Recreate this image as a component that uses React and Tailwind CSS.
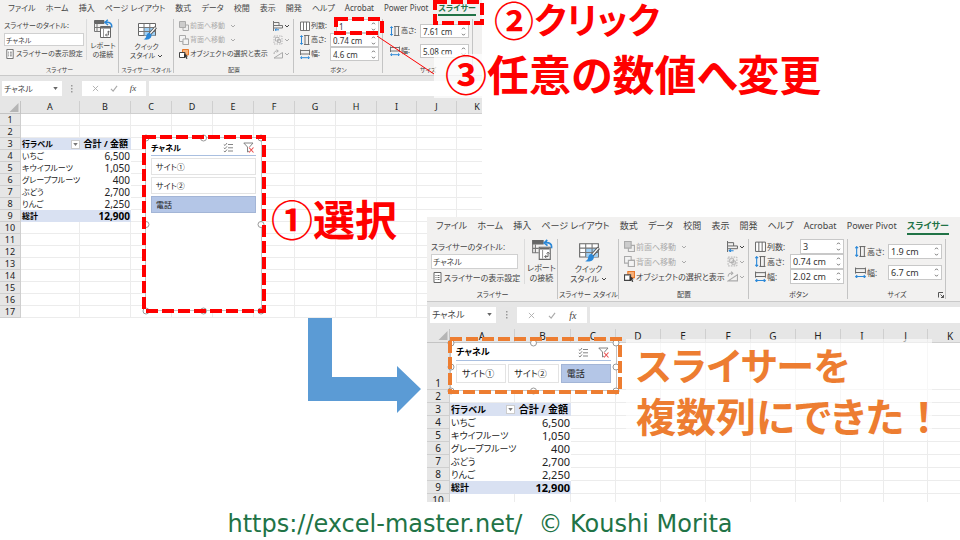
import React from "react";

const SIZES = {
  sm: {
    tabs: "h-[17px] pl-2 pr-[6px] text-[8px]",
    tabLine: "pb-px leading-[11px] border-b-2",
    body: "h-[58px] text-[7px] leading-[10px]",
    groups: ["w-[119px]", "w-[55px]", "w-[120px]", "w-[89px]", "w-[90px]"],
    groupLabel: "h-[11px] text-[6px]",
    titleBox: "h-[13px] w-20",
    titleCol: "w-[86px] pl-1 pt-1",
    bigIcon: "h-5 w-5",
    bigPad: "pt-1",
    bigText: "leading-[9px]",
    arrangeRow: "h-[14px]",
    icon: "h-[10px] w-[10px]",
    spinH: "h-[14px]",
    sizeGap: "gap-[6px]",
    colInput: "w-[43px]",
    spin: "w-[49px]",
    num: "text-[8px]",
    bar: "h-[25px] px-[2px] pt-[5px]",
    barBox: "h-[15px]",
    nameBox: "w-[60px] text-[8px]",
    dots: "w-[20px]",
    fxBox: "w-[64px] text-[9px]",
    head: "h-[13px] text-[9px]",
    first: "h-3",
    row: "h-3 text-[8px] leading-[10px]",
    cellNum: "text-[10px]",
    rowHead: "text-[9px]",
    cols: ["w-[59px]", "w-[51px]", "w-[41px]", "w-[41px]", "w-[41px]", "w-[41px]", "w-[41px]", "w-[41px]", "w-[40px]", "w-[40px]", "w-[41px]"],
    corner: "w-[21px]",
    cellHead: "text-[9px]",
  },
  lg: {
    tabs: "h-5 pl-[9px] pr-[11px] text-[9px]",
    tabLine: "pb-px leading-[12px] border-b-2",
    body: "h-[64px] text-[8px] leading-[11px]",
    groups: ["w-[131px]", "w-[61px]", "w-[130px]", "w-[99px]", "w-[98px]"],
    groupLabel: "h-[13px] text-[7px]",
    titleBox: "h-[15px] w-[87px]",
    titleCol: "w-[97px] pl-1 pt-1",
    bigIcon: "h-[22px] w-[22px]",
    bigPad: "pt-1",
    bigText: "leading-[10px]",
    arrangeRow: "h-[15px]",
    icon: "h-[11px] w-[11px]",
    spinH: "h-[15px]",
    sizeGap: "gap-[6px]",
    colInput: "w-[44px]",
    spin: "w-[54px]",
    num: "text-[9px]",
    bar: "h-[27px] px-[3px] pt-[5px]",
    barBox: "h-[16px]",
    nameBox: "w-[66px] text-[9px]",
    dots: "w-[21px]",
    fxBox: "w-[70px] text-[10px]",
    head: "h-[14px] text-[10px]",
    first: "h-[47px]",
    row: "h-[13px] text-[9px] leading-[11px]",
    cellNum: "text-[11px]",
    rowHead: "text-[10px]",
    cols: ["w-[65px]", "w-[56px]", "w-[45px]", "w-[45px]", "w-[45px]", "w-[45px]", "w-[45px]", "w-[45px]", "w-[43px]", "w-[44px]", "w-[45px]"],
    corner: "w-[23px]",
    cellHead: "text-[10px]",
  },
};

const TABS = ["ファイル", "ホーム", "挿入", "ページ レイアウト", "数式", "データ", "校閲", "表示", "開発", "ヘルプ", "Acrobat", "Power Pivot"];
const LETTERS = "ABCDEFGHIJK".split("");
const PIVOT = [
  ["いちご", "6,500"],
  ["キウイフルーツ", "1,050"],
  ["グレープフルーツ", "400"],
  ["ぶどう", "2,700"],
  ["りんご", "2,250"],
];

function Chevron({ className = "h-1 w-[6px]", up = false }) {
  return (
    <svg viewBox="0 0 6 4" className={className} fill="none" stroke="currentColor">
      <path d={up ? "M1 3 L3 1 L5 3" : "M1 1 L3 3 L5 1"} />
    </svg>
  );
}

function ReportIcon({ className }) {
  return (
    <svg viewBox="0 0 20 20" className={className} fill="none">
      <path d="M1.5 1.5H11V4.5H1.5Z" fill="#666" stroke="#666" />
      <path d="M1.5 4.5V12.5H7M1.5 8.5H7M4 5V12" stroke="#777" />
      <path d="M7.5 7.5H17.5V18.5H7.5Z" fill="#fff" stroke="#666" />
      <path d="M8 8.800H17" stroke="#666" strokeWidth="1.500" />
      <path d="M10.500 10V18" stroke="#999" />
      <path d="M12.500 16H15.500V12M12.500 16l1.500-1.500M12.500 16l1.500 1.500M15.500 12l-1.300 1.300M15.500 12l1.300 1.300" stroke="#555" strokeWidth=".8" />
      <path d="M18.500 8.500C19.500 5 17 2.500 12 3.500M14.800 .8L12 3.500L15 6" stroke="#2b88d8" strokeWidth="1.500" />
    </svg>
  );
}

function QuickIcon({ className }) {
  return (
    <svg viewBox="0 0 20 20" className={className} fill="none">
      <path d="M1.500 2.500H18.500V14.500H1.500Z" fill="#fff" stroke="#666" />
      <path d="M7 6.500H18V14.500H7Z" fill="#9fd0f5" />
      <path d="M1.500 6.500H18.500M1.500 10.500H18.500M7 2.500V14.500M12.800 2.500V14.500" stroke="#777" />
      <path d="M18.800 6.200L12.500 13.500" stroke="#555" strokeWidth="3" />
      <path d="M18.500 6.500L12.800 13" stroke="#fff" strokeWidth="1.200" />
      <path d="M13 12C10.500 11.500 9.500 13.500 9 16C8.700 17.300 7.500 18 6.500 18.300C10 19.300 14.500 18.500 14.500 14Z" fill="#2b88d8" />
    </svg>
  );
}

function FrontIcon({ className, back }) {
  return (
    <svg viewBox="0 0 10 10" className={className} fill="none" stroke="#aaa">
      <path d="M4 4H9.500V9.500H4Z" fill="#eee" />
      <path d="M.5 .5H6.500V6.500H.5Z" fill={back ? "#f3f3f3" : "#ccc"} />
      {back && <path d="M4 4H9.500V9.500H4Z" fill="#f3f3f3" />}
    </svg>
  );
}

function SelectIcon({ className }) {
  return (
    <svg viewBox="0 0 10 10" className={className} fill="none">
      <path d="M3.500 .5H9.500V6H3.500Z" fill="#f7b27a" stroke="#e8792b" />
      <path d="M.5 3.500H6V8.500H.5Z" fill="#fff" stroke="#444" />
      <path d="M5 4L9 7.500H7.500L8.500 9.500L7.300 10L6.500 8L5 9Z" fill="#333" />
    </svg>
  );
}

function AlignIcon({ className }) {
  return (
    <svg viewBox="0 0 10 10" className={className} fill="none" stroke="#666">
      <path d="M.5 0V10M1 1.500H6V4.500M1 4.500H9.500V7H1" strokeWidth=".9" />
      <path d="M6 8.800H2M3.500 7.500L2 8.800L3.500 10" stroke="#2b88d8" />
    </svg>
  );
}

function GroupIcon({ className }) {
  return (
    <svg viewBox="0 0 10 10" className={className} fill="none" stroke="#aaa" strokeWidth=".8">
      <path d="M1 1H9V9H1Z" strokeDasharray="1.500 1" />
      <path d="M2.500 2.500H6V6H2.500ZM4.500 4.500H7.500V7.500H4.500Z" />
    </svg>
  );
}

function RotateIcon({ className }) {
  return (
    <svg viewBox="0 0 10 10" className={className} fill="none" stroke="#aaa">
      <path d="M1 9H9.500V3.500Z" />
      <path d="M1 5C1 2.500 3 1.500 5 2M3.800 .5L5.300 2L3.800 3.500" />
    </svg>
  );
}

function ColumnsIcon({ className }) {
  return (
    <svg viewBox="0 0 10 10" className={className} fill="#fff" stroke="#666" strokeWidth=".9">
      <path d="M.5 1H9.500V9.500H.5ZM3.500 1V9.500M6.500 1V9.500" />
    </svg>
  );
}

function HeightIcon({ className }) {
  return (
    <svg viewBox="0 0 10 10" className={className} fill="none">
      <path d="M1.500 .7V9.300M.2 2L1.500 .6L2.800 2M.2 8L1.500 9.400L2.800 8" stroke="#2b88d8" />
      <path d="M4 .5H9.500M4 9.500H9.500M5 .5V9.500M8.500 .5V9.500" stroke="#666" strokeWidth=".9" />
    </svg>
  );
}

function WidthIcon({ className }) {
  return (
    <svg viewBox="0 0 10 10" className={className} fill="none">
      <path d="M.7 8.700H9.300M2 7.400L.6 8.700L2 10M8 7.400L9.400 8.700L8 10" stroke="#2b88d8" />
      <path d="M.5 .5V6M9.500 .5V6M.5 1.500H9.500M.5 5H9.500" stroke="#666" strokeWidth=".9" />
    </svg>
  );
}

function Group({ width, label, labelHeight, launcher, children }) {
  return (
    <section className={`relative flex shrink-0 flex-col ${width}`}>
      <div className="min-h-0 flex-1">{children}</div>
      <div className={`flex items-center justify-center whitespace-nowrap ${labelHeight}`}>{label}</div>
      <span className="absolute top-[2px] right-0 bottom-[2px] w-px bg-[#c4c4c4]" />
      {launcher && (
        <svg viewBox="0 0 6 6" className="absolute right-[2px] bottom-[3px] h-[6px] w-[6px]" fill="none" stroke="#555">
          <path d="M.5 5.500V.5H5M2.500 2.500L5.500 5.500M5.500 3V5.500H3" />
        </svg>
      )}
    </section>
  );
}

function SpinField({ s, id, icon: Icon, label, value, width }) {
  return (
    <div className={`flex items-center ${s.spinH}`}>
      <Icon className={`shrink-0 ${s.icon}`} />
      <label htmlFor={id} className="pl-px whitespace-nowrap">{label}</label>
      <div className={`ml-auto flex h-full shrink-0 items-center border border-[#c8c8c8] bg-white ${width}`}>
        <input id={id} defaultValue={value} className={`h-full w-full min-w-0 flex-1 bg-transparent pl-[2px] text-[#333] outline-none ${s.num}`} />
        <div className="flex h-full w-[10px] shrink-0 flex-col items-center justify-around">
          <button type="button" aria-label={`${label} +`} className="flex"><Chevron up className="h-[3px] w-[5px]" /></button>
          <button type="button" aria-label={`${label} -`} className="flex"><Chevron className="h-[3px] w-[5px]" /></button>
        </div>
      </div>
    </div>
  );
}

function Ribbon({ s, id, data, launcher }) {
  return (
    <header className="border-b border-[#c9c9c9] bg-[#f2f1f0] text-[#444]">
      <nav className={`flex items-center justify-between whitespace-nowrap ${s.tabs}`}>
        {TABS.map((t) => (
          <button type="button" key={t} className={`border-transparent ${s.tabLine}`}>{t}</button>
        ))}
        <button type="button" className={`border-[#217346] font-bold text-[#217346] ${s.tabLine}`}>スライサー</button>
      </nav>
      <div className={`flex ${s.body}`}>
        <Group width={s.groups[0]} label="スライサー" labelHeight={s.groupLabel}>
          <div className="flex h-full">
            <div className={`flex shrink-0 flex-col gap-[2px] whitespace-nowrap ${s.titleCol}`}>
              <label htmlFor={`${id}-title`}>スライサーのタイトル:</label>
              <input id={`${id}-title`} defaultValue="チャネル" className={`border border-[#d0d0d0] bg-white pl-px outline-none ${s.titleBox}`} />
              <button type="button" className="mt-px flex items-center gap-px pl-px">
                <svg viewBox="0 0 9 11" className={`shrink-0 ${s.icon}`} fill="#fff" stroke="#666">
                  <path d="M1 .5H8V10.500H1Z" />
                  <path d="M2.500 3.500H3.500M4.500 3.500H6.500M2.500 5.500H3.500M4.500 5.500H6.500M2.500 7.500H3.500M4.500 7.500H6.500" />
                </svg>
                スライサーの表示設定
              </button>
            </div>
            <button type="button" className={`mt-[2px] mb-1 flex flex-1 flex-col items-center border-l border-[#dcdcdc] whitespace-nowrap ${s.bigText}`}>
              <ReportIcon className={`mb-[2px] ${s.bigIcon}`} />
              <span>レポート</span>
              <span>の接続</span>
            </button>
          </div>
        </Group>
        <Group width={s.groups[1]} label="スライサー スタイル" labelHeight={s.groupLabel}>
          <button type="button" className={`flex w-full flex-col items-center whitespace-nowrap ${s.bigPad} ${s.bigText}`}>
            <QuickIcon className={`mb-px ${s.bigIcon}`} />
            <span>クイック</span>
            <span className="flex items-center gap-[2px]">スタイル <Chevron /></span>
          </button>
        </Group>
        <Group width={s.groups[2]} label="配置" labelHeight={s.groupLabel}>
          <div className="flex justify-between pt-[2px] pr-1 pl-[5px] whitespace-nowrap">
            <div>
              <button type="button" disabled className={`flex items-center gap-px text-[#aaa] ${s.arrangeRow}`}>
                <FrontIcon className={s.icon} />前面へ移動<Chevron className="ml-1 h-1 w-[6px]" />
              </button>
              <button type="button" disabled className={`flex items-center gap-px text-[#aaa] ${s.arrangeRow}`}>
                <FrontIcon back className={s.icon} />背面へ移動<Chevron className="ml-1 h-1 w-[6px]" />
              </button>
              <button type="button" className={`flex items-center gap-px ${s.arrangeRow}`}>
                <SelectIcon className={s.icon} />オブジェクトの選択と表示
              </button>
            </div>
            <div>
              <button type="button" aria-label="配置" className={`flex items-center gap-px ${s.arrangeRow}`}><AlignIcon className={s.icon} /><Chevron /></button>
              <button type="button" aria-label="グループ化" className={`flex items-center gap-px text-[#aaa] ${s.arrangeRow}`}><GroupIcon className={s.icon} /><Chevron /></button>
              <button type="button" aria-label="回転" className={`flex items-center gap-px text-[#aaa] ${s.arrangeRow}`}><RotateIcon className={s.icon} /><Chevron /></button>
            </div>
          </div>
        </Group>
        <Group width={s.groups[3]} label="ボタン" labelHeight={s.groupLabel}>
          <div className="pt-[2px] pr-1 pl-[6px]">
            <SpinField s={s} id={`${id}-cols`} icon={ColumnsIcon} label="列数:" value={data.cols} width={s.colInput} />
            <SpinField s={s} id={`${id}-bh`} icon={HeightIcon} label="高さ:" value="0.74 cm" width={s.spin} />
            <SpinField s={s} id={`${id}-bw`} icon={WidthIcon} label="幅:" value={data.buttonWidth} width={s.spin} />
          </div>
        </Group>
        <Group width={s.groups[4]} label="サイズ" labelHeight={s.groupLabel} launcher={launcher}>
          <div className={`flex flex-col pt-[7px] pr-1 pl-[7px] ${s.sizeGap}`}>
            <SpinField s={s} id={`${id}-h`} icon={HeightIcon} label="高さ:" value={data.height} width={s.spin} />
            <SpinField s={s} id={`${id}-w`} icon={WidthIcon} label="幅:" value={data.width} width={s.spin} />
          </div>
        </Group>
      </div>
    </header>
  );
}

function FormulaBar({ s, id }) {
  return (
    <div className={`flex items-start bg-[#e6e6e6] text-[#444] ${s.bar}`}>
      <div className={`relative shrink-0 bg-white ${s.barBox} ${s.nameBox}`}>
        <select aria-label="名前ボックス" className="h-full w-full appearance-none bg-transparent pl-[2px] outline-none">
          <option>チャネル</option>
        </select>
        <svg viewBox="0 0 6 4" className="absolute top-[6px] right-1 h-[3px] w-[5px]" fill="#666"><path d="M0 0H6L3 4Z" /></svg>
      </div>
      <div className={`flex shrink-0 items-center justify-center ${s.barBox} ${s.dots}`}>
        <svg viewBox="0 0 2 8" className="h-2 w-[2px]" fill="#999"><path d="M0 0H1.500V1.500H0ZM0 3H1.500V4.500H0ZM0 6H1.500V7.500H0Z" /></svg>
      </div>
      <div className={`mr-[3px] flex shrink-0 items-center justify-around bg-white px-1 ${s.barBox} ${s.fxBox}`}>
        <button type="button" aria-label="キャンセル">
          <svg viewBox="0 0 8 8" className="h-[7px] w-[7px]" stroke="#aaa" fill="none"><path d="M1 1L7 7M7 1L1 7" /></svg>
        </button>
        <button type="button" aria-label="入力">
          <svg viewBox="0 0 9 8" className="h-[7px] w-2" stroke="#aaa" strokeWidth="1.300" fill="none"><path d="M1 4.500L3.500 7L8 1" /></svg>
        </button>
        <button type="button" className="font-['Liberation_Serif',serif] italic">fx</button>
      </div>
      <input id={`${id}-formula`} aria-label="数式バー" className={`-mr-[3px] min-w-0 flex-1 bg-white outline-none ${s.barBox}`} />
    </div>
  );
}

function PivotCell({ s, row, col }) {
  if (row === 3 && col === 0) {
    return (
      <div className="flex items-center justify-between pl-px font-bold">
        行ラベル
        <button type="button" aria-label="フィルター" className="flex h-[9px] w-[9px] items-center justify-center border border-[#ccc] bg-white">
          <svg viewBox="0 0 6 4" className="h-[3px] w-[5px]" fill="#777"><path d="M0 0H6L3 4Z" /></svg>
        </button>
      </div>
    );
  }
  if (row === 3) return <div className={`pr-[3px] text-right font-bold ${s.cellHead}`}>合計 / 金額</div>;
  if (row === 9) {
    return col === 0
      ? <div className="pl-px font-bold">総計</div>
      : <div className={`pr-px text-right font-bold ${s.cellNum}`}>12,900</div>;
  }
  const item = PIVOT[row - 4];
  return col === 0
    ? <div className="pl-px">{item[0]}</div>
    : <div className={`pr-px text-right ${s.cellNum}`}>{item[1]}</div>;
}

function Sheet({ s, rows, children }) {
  const numbers = Array.from({ length: rows }, (_, i) => i + 1);
  return (
    <div className="relative">
      <table className="w-px table-fixed border-separate border-spacing-0 whitespace-nowrap text-[#222]">
        <thead>
          <tr className={`bg-[#e6e6e6] leading-[10px] ${s.head}`}>
            <th className={`border-r border-b border-[#c4c4c4] p-0 ${s.corner}`}>
              <svg viewBox="0 0 10 10" className="mr-px ml-auto h-[9px] w-[10px]" fill="#b5b5b5"><path d="M10 0V10H0Z" /></svg>
            </th>
            {LETTERS.map((l, i) => (
              <th key={l} className={`border-r border-b border-[#cfcfcf] p-0 font-normal ${s.cols[i]}`}>{l}</th>
            ))}
          </tr>
        </thead>
        <tbody>
          {numbers.map((n) => (
            <tr key={n} className={n === 1 ? `${s.row} ${s.first}` : s.row}>
              <th className={`border-r border-b border-[#cfcfcf] bg-[#e6e6e6] p-0 align-bottom font-normal ${s.rowHead}`}>{n}</th>
              {LETTERS.map((l, c) => {
                const pivot = c < 2 && n >= 3 && n <= 9;
                const shaded = pivot && (n === 3 || n === 9);
                return (
                  <td key={l} className={`p-0 ${pivot ? "" : "border-r border-b border-[#ececec]"} ${shaded ? "bg-[#d9e1f2] text-black" : ""}`}>
                    {pivot && <PivotCell s={s} row={n} col={c} />}
                  </td>
                );
              })}
            </tr>
          ))}
        </tbody>
      </table>
      {children}
    </div>
  );
}

function Handles({ w, h }) {
  const points = [[0, 0], [w / 2, 0], [w, 0], [0, h / 2], [w, h / 2], [0, h], [w / 2, h], [w, h]];
  return (
    <svg className="pointer-events-none absolute inset-0 h-full w-full overflow-visible" fill="#fff" stroke="#999">
      {points.map(([x, y]) => <circle key={`${x}-${y}`} cx={x} cy={y} r="3" />)}
    </svg>
  );
}

function SlicerHeader() {
  return (
    <div className="flex items-center border-b border-[#a9bfe0] pr-[2px] pb-[2px]">
      <span className="flex-1 font-bold text-black">チャネル</span>
      <button type="button" aria-label="複数選択" className="mr-[9px]">
        <svg viewBox="0 0 11 11" className="h-[11px] w-[11px]" fill="none" stroke="#777" strokeWidth=".9">
          <path d="M5 2.500H10M5 5.800H10M5 9H10M.8 2.500L2 3.500L4 1M.8 5.800L2 6.800L4 4.300M.8 9L2 10L4 7.500" />
        </svg>
      </button>
      <button type="button" aria-label="フィルターのクリア">
        <svg viewBox="0 0 11 11" className="h-[11px] w-[11px]" fill="none" strokeWidth=".9">
          <path d="M.8 1H10L6.500 5M.8 1L4.500 5V10L6 9" stroke="#777" />
          <path d="M6 5.500L10.500 10.500M10.500 5.500L6 10.500" stroke="#e84c4c" strokeWidth="1.100" />
        </svg>
      </button>
    </div>
  );
}

function SlicerItems({ height, tall }) {
  return ["サイト①", "サイト②", "電話"].map((t) => (
    <button
      type="button"
      key={t}
      className={`border text-left ${height} ${tall ? "pl-1" : "flex-1 pl-[5px]"} ${t === "電話" ? "border-[#a3b5d6] bg-[#b4c6e7]" : "border-[#e3e3e3] bg-white"}`}
    >
      {t}
    </button>
  ));
}

export default function App() {
  return (
    <main className="relative h-screen min-h-[540px] w-full overflow-hidden bg-white font-['Noto_Sans','Noto_Sans_CJK_JP',sans-serif] [font-feature-settings:'palt']">
      <section className="absolute top-0 left-0 h-[318px] w-[482px] overflow-hidden bg-white">
        <Ribbon s={SIZES.sm} id="before" data={{ cols: "1", buttonWidth: "4.6 cm", height: "7.61 cm", width: "5.08 cm" }} />
        <FormulaBar s={SIZES.sm} id="before" />
        <Sheet s={SIZES.sm} rows={17}>
          <div className="absolute top-[36px] left-[145px] h-[174px] w-[117px] border border-[#c4c4c4] bg-white text-[8px] leading-[11px] text-[#222]">
            <div className="flex flex-col gap-[2px] pt-1 pr-[5px] pl-[5px]">
              <SlicerHeader />
              <SlicerItems height="h-[17px]" tall />
            </div>
            <Handles w={115} h={173} />
          </div>
        </Sheet>
      </section>

      <section className="absolute top-[217px] right-0 left-[427px] h-[285px] overflow-hidden bg-white">
        <Ribbon s={SIZES.lg} id="after" data={{ cols: "3", buttonWidth: "2.02 cm", height: "1.9 cm", width: "6.7 cm" }} launcher />
        <FormulaBar s={SIZES.lg} id="after" />
        <Sheet s={SIZES.lg} rows={10}>
          <div className="absolute top-[13px] left-[23px] h-[49px] w-[167px] border border-[#c4c4c4] bg-white text-[9px] leading-[12px] text-[#222]">
            <div className="pt-[3px] pr-[5px] pl-[5px]">
              <SlicerHeader />
              <div className="flex gap-[2px] pt-[3px]">
                <SlicerItems height="h-[19px]" />
              </div>
            </div>
            <Handles w={165} h={48} />
          </div>
        </Sheet>
      </section>

      <div className="absolute top-[54px] left-[434px] h-[44px] w-[400px] bg-white/70" />
      <div className="absolute top-[339px] left-[626px] h-[101px] w-[306px] bg-white/60" />

      <svg className="pointer-events-none absolute inset-0 h-full w-full" fill="none">
        <path d="M308 318H332V377H397V366L421 389L397 413V401H308Z" fill="#5b9bd5" />
        <path d="M377 36L434 74" stroke="#ff0000" />
        <g stroke="#ff0000" strokeWidth="4" strokeDasharray="12 4">
          <path d="M144 137H264V311H144Z" />
          <path d="M435 2H482V23H435Z" />
          <path d="M336 19H382V33H336Z" />
        </g>
        <path d="M450 339H620V392H450Z" stroke="#ed7d31" strokeWidth="4" strokeDasharray="12 4" />
      </svg>

      <p className="absolute top-0 left-[494px] flex items-center text-[40px] leading-[42px] font-bold whitespace-nowrap text-[#ff0000]">
        ②<span className="text-[36px]">クリック</span>
      </p>
      <p className="absolute top-[54px] left-[445px] text-[42px] leading-[42px] font-bold whitespace-nowrap text-[#ff0000]">③任意の数値へ変更</p>
      <p className="absolute top-[199px] left-[271px] text-[42px] leading-[42px] font-bold whitespace-nowrap text-[#ff0000]">①選択</p>
      <p className="absolute top-[343px] left-[636px] flex flex-col gap-2 leading-[44px] font-bold whitespace-nowrap text-[#ed7d31]">
        <span className="text-[38px]">スライサーを</span>
        <span className="text-[40px]">複数列にできた<span className="[font-feature-settings:normal]">！</span></span>
      </p>

      <footer className="absolute inset-x-0 bottom-0 flex h-8 items-center justify-center gap-4 font-['DejaVu_Sans',sans-serif] text-[24px] leading-8 whitespace-nowrap text-[#217346]">
        <a href="https://excel-master.net/">https://excel-master.net/</a>
        <span>© Koushi Morita</span>
      </footer>
    </main>
  );
}
